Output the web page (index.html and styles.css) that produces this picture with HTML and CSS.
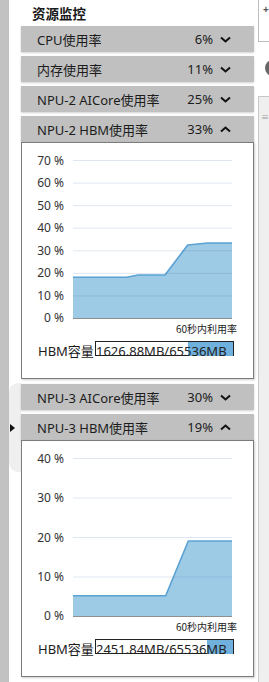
FILE: index.html
```html
<!DOCTYPE html>
<html lang="zh-CN">
<head>
<meta charset="utf-8">
<title>资源监控</title>
<link rel="stylesheet" href="styles.css">
</head>
<body>
<div class="page">
  <div class="strip"></div>
  <div class="gutter">
    <div class="tab"><span class="tri"></span></div>
  </div>
  <main class="panel">
    <h1 class="title">资源监控</h1>

    <div class="bar">
      <span class="name">CPU使用率</span><span class="pct">6%</span>
      <svg class="chev" width="11" height="7" viewBox="0 0 11 7"><polyline points="1,1.5 5.5,5.5 10,1.5"/></svg>
    </div>
    <div class="bar">
      <span class="name">内存使用率</span><span class="pct">11%</span>
      <svg class="chev" width="11" height="7" viewBox="0 0 11 7"><polyline points="1,1.5 5.5,5.5 10,1.5"/></svg>
    </div>
    <div class="bar">
      <span class="name">NPU-2 AICore使用率</span><span class="pct">25%</span>
      <svg class="chev" width="11" height="7" viewBox="0 0 11 7"><polyline points="1,1.5 5.5,5.5 10,1.5"/></svg>
    </div>
    <div class="bar bar-open">
      <span class="name">NPU-2 HBM使用率</span><span class="pct">33%</span>
      <svg class="chev" width="11" height="7" viewBox="0 0 11 7"><polyline points="1,5.5 5.5,1.5 10,5.5"/></svg>
    </div>
    <div class="chart">
      <svg class="plot" width="231" height="180" viewBox="0 0 231 180">
        <polygon class="area" points="51,175.5 51,134.3 104.7,134.3 116,132 143,132 165.7,102 186,100 210,100 210,175.5"/>
        <polyline class="line" points="51,134.3 104.7,134.3 116,132 143,132 165.7,102 186,100 210,100"/>
        <g class="grid">
          <line x1="51" x2="210" y1="17.5" y2="17.5"/>
          <line x1="51" x2="210" y1="40.1" y2="40.1"/>
          <line x1="51" x2="210" y1="62.6" y2="62.6"/>
          <line x1="51" x2="210" y1="85.2" y2="85.2"/>
          <line x1="51" x2="210" y1="107.8" y2="107.8"/>
          <line x1="51" x2="210" y1="130.4" y2="130.4"/>
          <line x1="51" x2="210" y1="152.9" y2="152.9"/>
        </g>
        <line class="axis" x1="51" x2="210" y1="175.5" y2="175.5"/>
        <g class="ylab">
          <text x="42" y="21.5">70 %</text>
          <text x="42" y="44.1">60 %</text>
          <text x="42" y="66.6">50 %</text>
          <text x="42" y="89.2">40 %</text>
          <text x="42" y="111.8">30 %</text>
          <text x="42" y="134.4">20 %</text>
          <text x="42" y="156.9">10 %</text>
          <text x="42" y="178.5">0 %</text>
        </g>
      </svg>
      <div class="caption">60秒内利用率</div>
      <div class="hbm">
        <span class="hbm-label">HBM容量</span>
        <div class="meter">
          <div class="fill" style="width:45px"></div>
          <span class="meter-text">1626.88MB/65536MB</span>
        </div>
      </div>
    </div>

    <div class="bar">
      <span class="name">NPU-3 AICore使用率</span><span class="pct">30%</span>
      <svg class="chev" width="11" height="7" viewBox="0 0 11 7"><polyline points="1,1.5 5.5,5.5 10,1.5"/></svg>
    </div>
    <div class="bar bar-open">
      <span class="name">NPU-3 HBM使用率</span><span class="pct">19%</span>
      <svg class="chev" width="11" height="7" viewBox="0 0 11 7"><polyline points="1,5.5 5.5,1.5 10,5.5"/></svg>
    </div>
    <div class="chart">
      <svg class="plot" width="231" height="180" viewBox="0 0 231 180">
        <polygon class="area" points="51,175.5 51,154.7 143.7,154.7 166.3,100 210,100 210,175.5"/>
        <polyline class="line" points="51,154.7 143.7,154.7 166.3,100 210,100"/>
        <g class="grid">
          <line x1="51" x2="210" y1="17.5" y2="17.5"/>
          <line x1="51" x2="210" y1="57" y2="57"/>
          <line x1="51" x2="210" y1="96.5" y2="96.5"/>
          <line x1="51" x2="210" y1="136" y2="136"/>
        </g>
        <line class="axis" x1="51" x2="210" y1="175.5" y2="175.5"/>
        <g class="ylab">
          <text x="42" y="21.5">40 %</text>
          <text x="42" y="61">30 %</text>
          <text x="42" y="100.5">20 %</text>
          <text x="42" y="140">10 %</text>
          <text x="42" y="178.5">0 %</text>
        </g>
      </svg>
      <div class="caption">60秒内利用率</div>
      <div class="hbm">
        <span class="hbm-label">HBM容量</span>
        <div class="meter">
          <div class="fill" style="width:26px"></div>
          <span class="meter-text">2451.84MB/65536MB</span>
        </div>
      </div>
    </div>
  </main>
  <div class="sep"></div>
  <aside class="side">
    <div class="side-top"><span class="side-glyph">+</span></div>
    <div class="side-dot"></div>
    <div class="side-box"><span class="side-mark">≡</span></div>
  </aside>
</div>
</body>
</html>
```

FILE: styles.css
```css
* { box-sizing: border-box; }
html, body { margin: 0; padding: 0; background: #fff; }
body {
  width: 269px;
  height: 682px;
  overflow: hidden;
  font-family: "Noto Sans", "Noto Sans CJK SC", sans-serif;
  color: #1c1c1c;
}
.page {
  display: flex;
  height: 682px;
}
.strip {
  width: 9px;
  flex: none;
  background: #c2c2c2;
}
.gutter {
  width: 12px;
  flex: none;
  padding-top: 383px;
}
.tab {
  height: 89px;
  background: #efefef;
  border-radius: 9px 0 0 9px;
  display: flex;
  align-items: center;
  padding-left: 1px;
}
.tri {
  width: 0;
  height: 0;
  border-top: 4px solid transparent;
  border-bottom: 4px solid transparent;
  border-left: 5px solid #111;
}
.panel {
  width: 233px;
  flex: none;
  display: flex;
  flex-direction: column;
}
.title {
  margin: 0;
  height: 26px;
  line-height: 26px;
  padding-left: 11px;
  font-size: 13.5px;
  font-weight: bold;
  font-family: "Noto Sans CJK SC", sans-serif;
  color: #1a1a1a;
}
.bar {
  height: 26px;
  background: #c0c0c0;
  display: flex;
  align-items: center;
  padding-left: 16px;
  font-size: 13px;
  margin-bottom: 4px;
  box-shadow: 0 1px 2px rgba(0, 0, 0, 0.18);
  white-space: nowrap;
}
.bar-open { margin-bottom: 0; }
.name { flex: 1; }
.chev {
  margin-left: 7px;
  margin-right: 23px;
  fill: none;
  stroke: #111;
  stroke-width: 2;
}
.chart {
  height: 237px;
  border: 1px solid #7c7c7c;
  background: #fff;
  box-shadow: 1px 1px 2px rgba(0, 0, 0, 0.2);
  margin-bottom: 5px;
}
.plot { display: block; overflow: visible; }
.area { fill: #9dcae5; }
.line { fill: none; stroke: #5aa2d4; stroke-width: 1.6; stroke-linejoin: round; }
.grid line { stroke: rgba(60, 100, 170, 0.16); stroke-width: 1; }
.axis { stroke: #8f8f8f; stroke-width: 1; }
.ylab text {
  font-family: "Noto Sans", sans-serif;
  font-size: 12px;
  fill: #333;
  text-anchor: end;
}
.caption {
  height: 11px;
  line-height: 11px;
  font-size: 10px;
  font-family: "Noto Sans CJK SC", sans-serif;
  text-align: right;
  padding-right: 16px;
  color: #222;
}
.hbm {
  display: flex;
  align-items: flex-start;
  margin-top: 7px;
  padding-left: 16px;
  font-size: 13px;
  white-space: nowrap;
}
.hbm-label {
  width: 57px;
  line-height: 15px;
  margin-top: 3px;
}
.meter {
  position: relative;
  width: 139px;
  height: 15px;
  border: 1px solid #222;
}
.fill {
  position: absolute;
  right: 0;
  top: 0;
  bottom: -1px;
  background: #6fb1dc;
}
.meter-text {
  position: absolute;
  left: 0;
  top: 2px;
  line-height: 15px;
  color: #222;
}
.sep { width: 4px; flex: none; }
.side {
  flex: 1;
  display: flex;
  flex-direction: column;
}
.side-top {
  height: 42px;
  border-left: 1px solid #bdbdbd;
  border-bottom: 1px solid #bdbdbd;
  padding-left: 4px;
  padding-top: 2px;
  font-size: 10px;
  font-weight: bold;
  line-height: 14px;
  color: #555;
}
.side-dot {
  width: 16px;
  height: 16px;
  border-radius: 50%;
  background: #666;
  margin-top: 18px;
  margin-left: 7px;
}
.side-box {
  flex: 1;
  margin-top: 20px;
  border-left: 1px solid #c8c8c8;
  border-top: 1px solid #c8c8c8;
  background: #efefef;
  padding-left: 2px;
  padding-top: 15px;
  font-size: 8px;
  line-height: 10px;
  color: #999;
}
```
